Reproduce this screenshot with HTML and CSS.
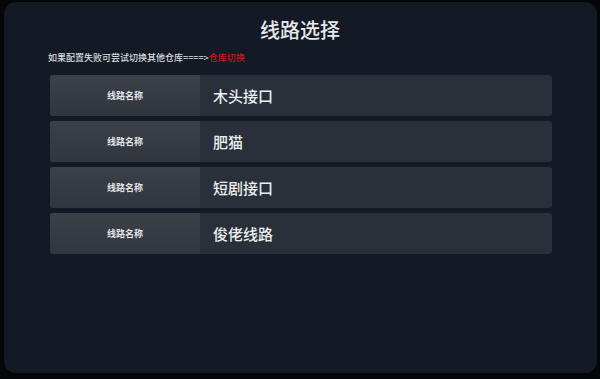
FILE: index.html
```html
<!DOCTYPE html>
<html lang="zh-CN">
<head>
    <meta charset="UTF-8">
    <meta name="viewport" content="width=device-width, initial-scale=1.0">
    <title>线路选择</title>
    <link rel="stylesheet" href="styles.css">
</head>
<body>
    <div class="screen">
        <h1 class="title">线路选择</h1>
        <p class="tip">如果配置失败可尝试切换其他仓库====&gt;<span class="tip-link">仓库切换</span></p>

        <div class="route-list">
            <div class="route">
                <div class="route-label">线路名称</div>
                <div class="route-name">木头接口</div>
            </div>
            <div class="route">
                <div class="route-label">线路名称</div>
                <div class="route-name">肥猫</div>
            </div>
            <div class="route">
                <div class="route-label">线路名称</div>
                <div class="route-name">短剧接口</div>
            </div>
            <div class="route">
                <div class="route-label">线路名称</div>
                <div class="route-name">俊佬线路</div>
            </div>
        </div>
    </div>
</body>
</html>
```

FILE: styles.css
```css
* {
    margin: 0;
    padding: 0;
    box-sizing: border-box;
    font-family: 'Noto Sans CJK SC', 'Noto Sans', sans-serif;
}

html, body {
    height: 100%;
}

body {
    background-color: #050608;
    padding: 2px 3px 6px 4px;
}

.screen {
    height: 100%;
    background-color: #131a25;
    border-radius: 12px;
    padding: 14px 45px 0 44px;
}

.title {
    text-align: center;
    color: #e6e8ea;
    font-size: 20px;
    font-weight: 500;
    line-height: 28px;
}

.tip {
    margin-top: 7px;
    color: #d8dadc;
    font-size: 9px;
    font-weight: 500;
    line-height: 14px;
}

.tip-link {
    color: #d0121b;
}

.route-list {
    margin-top: 10px;
    margin-left: 2px;
    display: flex;
    flex-direction: column;
    gap: 5px;
}

.route {
    display: flex;
    height: 41px;
    border-radius: 3px;
    overflow: hidden;
    background-color: #2a303a;
}

.route-label {
    width: 150px;
    display: flex;
    align-items: center;
    justify-content: center;
    background: linear-gradient(#3b4049, #30353e);
    color: #e2e4e6;
    font-size: 9px;
    font-weight: bold;
}

.route-name {
    flex: 1;
    display: flex;
    align-items: center;
    padding-left: 13px;
    color: #eceef0;
    font-size: 15px;
    font-weight: 500;
}
```
